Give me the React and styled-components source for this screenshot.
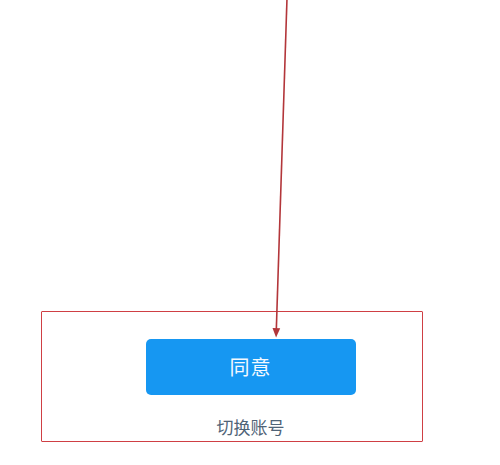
import React from 'react';
import styled, {createGlobalStyle} from 'styled-components';

const GlobalStyle = createGlobalStyle`
  html, body {
    margin: 0;
    padding: 0;
    background: #fff;
  }
  body {
    font-family: "Noto Sans CJK SC", "Noto Sans", sans-serif;
  }
`;

const Page = styled.div`
  position: relative;
  width: 500px;
  height: 465px;
  overflow: hidden;
  background: #fff;
  padding-top: 311px;
  box-sizing: border-box;
`;

const HighlightBox = styled.div`
  margin-left: 41px;
  width: 382px;
  height: 131px;
  box-sizing: border-box;
  border: 1.5px solid #cf3f44;
  border-radius: 1px;
  display: flex;
  flex-direction: column;
  align-items: center;
  padding-top: 26.5px;
  padding-left: 37px;
`;

const AgreeButton = styled.button`
  width: 210px;
  height: 56px;
  border: none;
  border-radius: 5px;
  background: #1697f2;
  color: #f4f9ff;
  font-family: inherit;
  font-size: 20px;
  letter-spacing: 1px;
  cursor: pointer;
  display: flex;
  align-items: center;
  justify-content: center;
  padding: 0;
`;

const SwitchLink = styled.a`
  margin-top: 20px;
  color: #4f6377;
  font-size: 17px;
  line-height: 24px;
  cursor: pointer;
`;

const ArrowLayer = styled.svg`
  position: absolute;
  left: 0;
  top: 0;
  pointer-events: none;
`;

function Arrow() {
  return (
    <ArrowLayer width="500" height="465" viewBox="0 0 500 465">
      <line x1="287" y1="-2" x2="276.3" y2="330" stroke="#b3363a" strokeWidth="1.6"/>
      <polygon points="272.5,328 280.2,328.3 276.1,337.5" fill="#b3363a"/>
    </ArrowLayer>
  );
}

export default function App() {
  return (
    <>
      <GlobalStyle/>
      <Page>
        <HighlightBox>
          <AgreeButton>同意</AgreeButton>
          <SwitchLink>切换账号</SwitchLink>
        </HighlightBox>
        <Arrow/>
      </Page>
    </>
  );
}
